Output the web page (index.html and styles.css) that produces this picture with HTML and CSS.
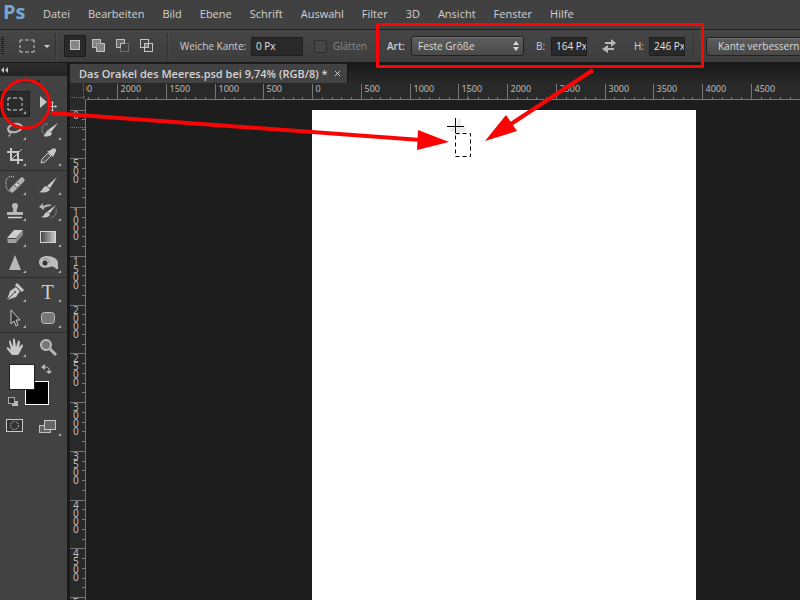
FILE: index.html
```html
<!DOCTYPE html>
<html lang="de">
<head>
<meta charset="utf-8">
<title>Das Orakel des Meeres.psd</title>
<link rel="stylesheet" href="styles.css">
</head>
<body>
<div class="app">
  <header class="menubar">
    <span class="brand">Ps</span>
    <nav class="menu">
      <a href="#">Datei</a><a href="#">Bearbeiten</a><a href="#">Bild</a><a href="#">Ebene</a><a href="#">Schrift</a><a href="#">Auswahl</a><a href="#">Filter</a><a href="#">3D</a><a href="#">Ansicht</a><a href="#">Fenster</a><a href="#">Hilfe</a>
    </nav>
  </header>

  <div class="options">
    <span class="grip-v"></span>
    <button class="preset" aria-label="Auswahlrechteck">
      <svg width="34" height="16" viewBox="0 0 34 16"><path d="M1 5V2h3M6 2h4M12 2h3v3M15 7v3M15 12v2h-3M10 14H6M4 14H1v-2M1 10V7" fill="none" stroke="#c8c8c8"/><path d="M25 7h6l-3 3z" fill="#d0d0d0"/></svg>
    </button>
    <span class="divider"></span>
    <div class="modes">
      <button class="mode active" aria-label="Neue Auswahl"><svg width="16" height="16"><rect x="3.500" y="2.500" width="9" height="9" fill="#858585" stroke="#c4c4c4"/></svg></button>
      <button class="mode" aria-label="Hinzufügen"><svg width="16" height="16"><path d="M1.500 1.500h8v4h4v8h-8v-4h-4z" fill="#858585" stroke="#c4c4c4"/><path d="M5.500 9V5.500H9" fill="none" stroke="#a0a0a0"/></svg></button>
      <button class="mode" aria-label="Subtrahieren"><svg width="16" height="16"><rect x="5.500" y="5.500" width="8" height="8" fill="none" stroke="#707070"/><path d="M1.500 1.500h8v4h-4v4h-4z" fill="#686868" stroke="#c4c4c4"/></svg></button>
      <button class="mode" aria-label="Schnittmenge"><svg width="16" height="16"><rect x="5.500" y="5.500" width="4" height="4" fill="#777"/><rect x="1.500" y="1.500" width="8" height="8" fill="none" stroke="#c4c4c4"/><rect x="5.500" y="5.500" width="8" height="8" fill="none" stroke="#c4c4c4"/></svg></button>
    </div>
    <span class="divider"></span>
    <label class="label label-wide" for="feather">Weiche Kante:</label>
    <input class="field field-wide" id="feather" type="text" value="0 Px">
    <input class="check" id="smooth" type="checkbox" disabled>
    <label class="label label-muted" for="smooth">Glätten</label>
    <label class="label label-style" for="style">Art:</label>
    <span class="select">
      <select id="style"><option>Feste Größe</option></select>
      <svg class="select-arrows" width="7" height="10"><path d="M0 4l3-4 3 4zM0 6l3 4 3-4z" fill="#d8d8d8"/></svg>
    </span>
    <label class="label label-dim" for="w">B:</label>
    <input class="field" id="w" type="text" value="164 Px">
    <button class="swap" aria-label="Tauschen"><svg width="16" height="14"><path d="M3 3h6V0l5 4-5 4V5H3zM12 9H6V6L0 10l6 4v-3h6z" fill="#b8b8b8"/></svg></button>
    <label class="label label-dim" for="h">H:</label>
    <input class="field" id="h" type="text" value="246 Px">
    <span class="divider divider-end"></span>
    <button class="refine">Kante verbessern...</button>
  </div>

  <main class="workspace">
    <aside class="tools">
      <div class="tools-head"><svg width="8" height="7"><path d="M3 0v6L0 3zM7 0v6L4 3z" fill="#c4c4c4"/></svg></div>
      <div class="grip-h"><i></i></div>
      <div class="tool-group">
        <button class="tool more active" aria-label="Auswahlrechteck"><svg width="20" height="20"><path d="M3 7V4h3M8 4h4M14 4h3v3M17 9v3M17 14v2h-3M12 16H8M6 16H3v-2M3 12V9" fill="none" stroke="#d2d2d2"/></svg></button>
        <button class="tool" aria-label="Verschieben"><svg width="20" height="20"><path d="M2 2v12l7-6z" fill="#c8c8c8"/><path d="M14.500 8v8M10 12.500h9" stroke="#c8c8c8"/><path d="M13 9l1.500-2L16 9zM13 16l1.500 2 1.500-2zM12 11l-2 1.500 2 1.500zM17 11l2 1.500-2 1.500z" fill="#c8c8c8"/></svg></button>
        <button class="tool more" aria-label="Lasso"><svg width="20" height="20"><ellipse cx="10" cy="8" rx="7" ry="4" fill="none" stroke="#b8b8b8" stroke-width="2" transform="rotate(-12 10 8)"/><path d="M4 10c-2 2 1 4 3 2M5 13c1 2 0 3-2 3" fill="none" stroke="#c8c8c8"/></svg></button>
        <button class="tool more" aria-label="Schnellauswahl"><svg width="20" height="20"><path d="M10 4a5 5 0 1 0-1 11" fill="none" stroke="#c0c0c0" stroke-dasharray="1 1"/><path d="M20 3l-7 9-3-2z" fill="#d2d2d2"/><path d="M10 10l4 3c-1 4-5 4-9 3 3-1 2-4 5-6z" fill="#c8c8c8"/></svg></button>
        <button class="tool more" aria-label="Freistellen"><svg width="20" height="20"><path d="M6 2v12h12M2 6h11v12" fill="none" stroke="#c8c8c8" stroke-width="2"/><path d="M7 13L17 3" stroke="#c8c8c8"/></svg></button>
        <button class="tool more" aria-label="Pipette"><svg width="20" height="20"><path d="M3 17l1-4 6-6 3 3-6 6z" fill="#555" stroke="#c8c8c8"/><path d="M9 5l6 6 1-2 2-4c1-2-2-4-4-2l-3 2z" fill="#c8c8c8"/></svg></button>
      </div>
      <div class="tool-group">
        <button class="tool more" aria-label="Reparaturpinsel"><svg width="20" height="20"><path d="M9 2C4 0 0 4 1 9c0 3 1 6 3 7" fill="none" stroke="#ddd" stroke-dasharray="1 1"/><path d="M7 15L17 5" stroke="#b0b0b0" stroke-width="5" stroke-linecap="round"/><path d="M8 9l5 5M11 6l5 5" stroke="#696969"/><path d="M12 9v1M11 10h1M13 10h1" stroke="#eee"/></svg></button>
        <button class="tool more" aria-label="Pinsel"><svg width="20" height="20"><path d="M19 2l-7 11-3-2z" fill="#d0d0d0"/><path d="M8 11l4 3c-2 4-6 4-11 3 4-1 3-5 7-6z" fill="#c4c4c4"/></svg></button>
        <button class="tool more" aria-label="Stempel"><svg width="20" height="20"><path d="M7 5a3 3 0 0 1 6 0c0 2-2 3-1 6h6v3H2v-3h6c1-3-1-4-1-6z" fill="#b8b8b8"/><path d="M3 16.500h14" stroke="#d4d4d4" stroke-width="1.500"/></svg></button>
        <button class="tool more" aria-label="Protokollpinsel"><svg width="20" height="20"><path d="M18 4l-6 8-3-1z" fill="#ddd"/><path d="M9 11l3 2c-1 4-5 4-9 3 4-1 3-4 6-5z" fill="#c8c8c8"/><path d="M14 4c-4-1-7 0-9 1V2L1 6l5 3V7c3-2 6-1 8-3z" fill="#b4b4b4"/><path d="M18 8c1 4-1 8-6 9" fill="none" stroke="#bbb" stroke-dasharray="1 1"/></svg></button>
        <button class="tool more" aria-label="Radiergummi"><svg width="20" height="20"><path d="M9 3h9l-7 8H2z" fill="#cfcfcf"/><path d="M2 12h9v4H3z" fill="#a0a0a0"/><path d="M11 11l7-8v5l-7 8z" fill="#898989"/></svg></button>
        <button class="tool more" aria-label="Verlauf"><svg width="20" height="20"><defs><linearGradient id="gr"><stop stop-color="#444"/><stop offset="1" stop-color="#ccc"/></linearGradient></defs><rect x="2.500" y="4.500" width="15" height="11" fill="url(#gr)" stroke="#d4d4d4"/></svg></button>
        <button class="tool more" aria-label="Scharfzeichner"><svg width="20" height="20"><path d="M10 2l6 15H4z" fill="#b8b8b8"/></svg></button>
        <button class="tool more" aria-label="Schwamm"><svg width="20" height="20"><path d="M1 9c0-4 4-6 8-6 6 0 11 3 11 7v6h-2c-1-2-4-3-6-2-6 2-11 0-11-5z" fill="#bcbcbc"/><circle cx="7" cy="10" r="2.500" fill="#333"/><path d="M5 6c4-1 7 1 6 4" fill="none" stroke="#888"/></svg></button>
      </div>
      <div class="tool-group">
        <button class="tool more" aria-label="Zeichenstift"><svg width="20" height="20"><path d="M2 18l3-9 6-4 4 4-4 6z" fill="#c8c8c8"/><path d="M11 2l7 7" stroke="#c8c8c8" stroke-width="3"/><path d="M10 4l6 6" stroke="#555"/><path d="M2 18l7-7" stroke="#444"/><circle cx="10" cy="10" r="1" fill="#444"/></svg></button>
        <button class="tool tool-type more" aria-label="Text">T</button>
        <button class="tool more" aria-label="Pfadauswahl"><svg width="20" height="20"><path d="M6 2v14l3-3 2 5 2-1-2-5h4z" fill="#333" stroke="#c8c8c8"/></svg></button>
        <button class="tool more" aria-label="Abgerundetes Rechteck"><svg width="20" height="20"><rect x="3.500" y="4.500" width="13" height="11" rx="3" fill="#777" stroke="#c0c0c0"/></svg></button>
      </div>
      <div class="tool-group tool-group-plain">
        <button class="tool more" aria-label="Hand"><svg width="20" height="20"><path d="M7 18l-5-6c-1-2 1-2 2-1l2 2-2-8c0-2 2-2 2 0l2 5V3c0-2 2-2 2 0l1 7 2-6c1-1 2 0 2 1l-1 6 2-3c1-1 2 0 2 1l-3 6-2 3z" fill="#c8c8c8"/></svg></button>
        <button class="tool" aria-label="Zoom"><svg width="20" height="20"><path d="M12 12l6 6" stroke="#b8b8b8" stroke-width="3"/><circle cx="8" cy="8" r="5" fill="#777" stroke="#bebebe" stroke-width="2"/></svg></button>
      </div>
      <svg class="swatches" width="66" height="50"><rect x="25.500" y="18.500" width="23" height="23" fill="#000" stroke="#fff"/><rect x="9" y="1" width="26" height="26" fill="#222"/><rect x="10" y="2" width="24" height="24" fill="#fff"/><path d="M43 4h3c2 0 3 1 3 3v2" fill="none" stroke="#bbb"/><path d="M45 1v6l-4-3zM46 8h6l-3 3z" fill="#bbb"/><rect x="12" y="38" width="6" height="5" fill="#b8b8b8"/><rect x="8.500" y="34.500" width="6" height="6" fill="#333" stroke="#aaa"/></svg>
      <div class="tool-group tool-group-plain">
        <button class="tool" aria-label="Maskierungsmodus"><svg width="20" height="20"><rect x="1.500" y="3.500" width="16" height="12" fill="#333" stroke="#c8c8c8"/><circle cx="9.500" cy="9.500" r="4" fill="none" stroke="#ddd" stroke-dasharray="1 1"/></svg></button>
        <button class="tool more" aria-label="Bildschirmmodus"><svg width="20" height="20"><rect x="1.500" y="9.500" width="11" height="7" fill="#666" stroke="#c0c0c0"/><rect x="6.500" y="4.500" width="11" height="9" fill="#666" stroke="#c8c8c8"/></svg></button>
      </div>
    </aside>

    <section class="document">
      <div class="tabs"><div class="tab"><span>Das Orakel des Meeres.psd bei 9,74% (RGB/8) *</span><button class="close" aria-label="Schließen"><svg width="7" height="7"><path d="M1 1l5 5M6 1L1 6" stroke="#d0d0d0"/></svg></button></div></div>
      <svg class="ruler ruler-x" id="rx"></svg>
      <div class="stage">
        <svg class="ruler ruler-y" id="ry"></svg>
        <div class="canvas"><div class="sheet"></div></div>
      </div>
    </section>
  </main>

  <svg class="marks">
    <path d="M459 119v16M450 129.500h16" stroke="#000" stroke-width="4" opacity=".08"/>
    <path d="M455.500 118v15M447 126.500h17" stroke="#000"/>
    <rect x="455.500" y="133.500" width="15" height="23" fill="none" stroke="#000" stroke-dasharray="4 3"/>
    <g fill="none" stroke="#f80505" stroke-width="3">
      <rect x="377.500" y="24.500" width="325" height="42"/>
      <circle cx="25.500" cy="104" r="24"/>
      <path d="M51 113l370 27M593 70l-82 54" stroke-width="4"/>
    </g>
    <path d="M449 142l-31-12-1 20zM485 141l21-26 11 16z" fill="#fc0202"/>
  </svg>
</div>
<script src="rulers.js"></script>
</body>
</html>
```
FILE: styles.css
```css
* { box-sizing: border-box; }
body { margin: 0; background: #1d1d1d; color: #c8c8c8; font: 10px "Open Sans", "Noto Sans", sans-serif; }
button { margin: 0; padding: 0; border: 0; background: none; color: inherit; font: inherit; }
svg { display: block; flex: none; }
.app { position: relative; display: flex; flex-direction: column; height: 100vh; overflow: hidden; }

.menubar { display: flex; align-items: flex-start; flex: none; height: 29px; background: #414141; }
.brand { width: 43px; padding-left: 3px; color: #73a8d2; font: bold 20px/24px "Open Sans", sans-serif; }
.menu { display: flex; gap: 18px; }
.menu a { color: #d2d2d2; font: 11px/28px "Open Sans", sans-serif; text-decoration: none; }

.options { display: flex; align-items: center; flex: none; height: 34px; border-top: 1px solid #222; border-bottom: 1px solid #181818; background: linear-gradient(#454545, #3e3e3e); white-space: nowrap; overflow: hidden; }
.options > * { flex: none; }
.grip-v { width: 3px; height: 18px; margin-left: 1px; background: repeating-linear-gradient(#191919 0 1px, #444 1px 2px); }
.preset { margin: 0 2px 0 15px; }
.divider { width: 2px; height: 26px; border-left: 1px solid #333; border-right: 1px solid #494949; }
.modes { display: flex; gap: 2px; margin: 0 9px 0 7px; }
.mode { display: grid; place-items: center; width: 22px; height: 22px; border-radius: 2px; }
.mode.active { background: #292929; box-shadow: inset 0 0 0 1px #1c1c1c; }
.label { color: #d0d0d0; }
.label-wide { width: 71px; margin-left: 11px; }
.label-muted { width: 54px; color: #888; }
.label-style { width: 24px; font-weight: 600; }
.label-dim { width: 15px; }
.field { width: 36px; height: 19px; padding: 0 0 0 4px; border: 1px solid #1e1e1e; border-radius: 0; background: #292929; color: #e2e2e2; font: 10px "Open Sans", sans-serif; }
.field-wide { width: 52px; }
.check { appearance: none; width: 13px; height: 13px; margin: 0 6px 0 11px; border: 1px solid #2e2e2e; border-radius: 2px; background: #464646; }
.select { position: relative; margin-right: 12px; }
.select select { appearance: none; display: block; width: 113px; height: 20px; padding: 0 6px; border: 1px solid #202020; border-radius: 3px; background: linear-gradient(#5e5e5e, #494949); color: #dcdcdc; font: 10px "Open Sans", sans-serif; box-shadow: inset 0 1px #707070; }
.select-arrows { position: absolute; right: 4px; top: 5px; }
.swap { margin: 0 16px 0 15px; }
.divider-end { margin: 0 11px 0 8px; }
.refine { width: 120px; height: 19px; padding-left: 11px; border: 1px solid #222; border-radius: 3px; background: linear-gradient(#5c5c5c, #484848); color: #dcdcdc; text-align: left; box-shadow: inset 0 1px #707070; }

.workspace { display: flex; flex: 1; min-height: 0; }
.tools { display: flex; flex-direction: column; flex: none; width: 70px; border-right: 3px solid #191919; background: #424242; }
.tools-head { flex: none; height: 13px; padding: 4px 1px; background: linear-gradient(#2e2e2e, #222); }
.grip-h { flex: none; height: 15px; padding: 4px 0 0 21px; }
.grip-h i { display: block; width: 20px; height: 3px; background: repeating-linear-gradient(90deg, #191919 0 1px, #444 1px 2px); }
.tool-group { display: grid; grid-template-columns: 30px 35px; flex: none; padding-bottom: 1px; margin-bottom: 1px; border-bottom: 1px solid #2c2c2c; }
.tool-group-plain { border-color: transparent; }
.tool { position: relative; display: grid; place-items: center; height: 26px; }
.tool.active { background: #2b2b2b; box-shadow: inset 0 0 0 1px #202020; }
.more::after { content: ""; position: absolute; right: 4px; bottom: 3px; border-left: 3px solid transparent; border-bottom: 3px solid #b0b0b0; }
.tool-type { color: #d0d0d0; font: 20px/26px "Liberation Serif", serif; }

.document { display: flex; flex-direction: column; flex: 1; min-width: 0; }
.tabs { display: flex; flex: none; height: 21px; background: linear-gradient(#181818, #292929); }
.tab { display: flex; align-items: center; gap: 6px; height: 20px; padding: 0 6px 0 9px; border-right: 1px solid #151515; border-top: 1px solid #202020; background: #424242; color: #d4d4d4; font: 600 11px/18px "Open Sans", sans-serif; white-space: nowrap; }
.ruler { background: #292929; font: 9px "Noto Sans", sans-serif; fill: #bcbcbc; stroke: none; }
.ruler line { stroke: #777; }
.ruler-x { width: 100%; height: 16px; }
.stage { display: flex; flex: 1; min-height: 0; }
.ruler-y { width: 16px; height: 100%; font-size: 10px; }
.canvas { flex: 1; padding: 10px 104px 0 226px; background: #1d1d1d; }
.sheet { height: 100%; background: #fff; }
.marks { position: absolute; inset: 0; width: 100%; height: 100%; pointer-events: none; }
```
FILE: rulers.js
```js
const NS = "http://www.w3.org/2000/svg";
// One ruler step of 500 document pixels on screen, at 9.74 %.
const STEP = 48.75;

function add(svg, name, attrs, text) {
  const el = document.createElementNS(NS, name);
  for (const key in attrs) el.setAttribute(key, attrs[key]);
  if (text !== undefined) el.textContent = text;
  svg.appendChild(el);
}

function draw() {
  const rx = document.getElementById("rx");
  const ry = document.getElementById("ry");
  rx.replaceChildren();
  ry.replaceChildren();
  const width = rx.getBoundingClientRect().width;
  const height = ry.getBoundingClientRect().height;

  for (let i = -25; 242 + i * STEP / 5 < width; i++) {
    const x = Math.round(242 + i * STEP / 5) + 0.5;
    if (x > 16) add(rx, "line", { x1: x, x2: x, y1: i % 5 ? 13 : 0, y2: 16 });
    if (i % 5 === 0) add(rx, "text", { x: x + 3, y: 8 }, Math.abs(i * 100));
  }
  add(rx, "rect", { x: 0, y: 0, width: 16, height: 16, fill: "#292929" });
  add(rx, "line", { x1: 16, x2: "100%", y1: 15.5, y2: 15.5 });
  add(rx, "line", { x1: 0, x2: 16, y1: 13.5, y2: 13.5, "stroke-dasharray": "1 1" });
  add(rx, "line", { x1: 13.5, x2: 13.5, y1: 0, y2: 16, "stroke-dasharray": "1 1" });
  add(rx, "line", { x1: 397.5, x2: 397.5, y1: 0, y2: 16, "stroke-dasharray": "1 1" });

  for (let i = 0; 10 + i * STEP / 5 < height; i++) {
    const y = Math.floor(10 + i * STEP / 5) + 0.5;
    add(ry, "line", { x1: i % 5 ? 12 : 0, x2: 16, y1: y, y2: y });
    if (i % 5 === 0) {
      [...String(i * 100)].forEach((digit, n) => {
        const base = y + 8.5 + n * 8;
        if (base - 8 < height) add(ry, "text", { x: 3, y: base }, digit);
      });
    }
  }
  add(ry, "line", { x1: 15.5, x2: 15.5, y1: 0, y2: "100%" });
  add(ry, "line", { x1: 0, x2: 16, y1: 27.5, y2: 27.5, "stroke-dasharray": "1 1" });
}

draw();
window.addEventListener("resize", draw);
```
